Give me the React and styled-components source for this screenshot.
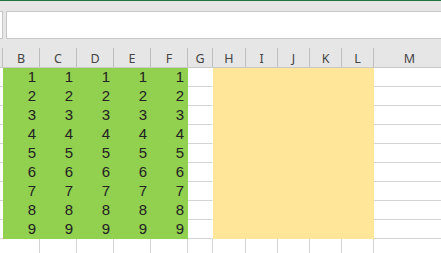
import styled, { createGlobalStyle } from "styled-components";

const GlobalStyle = createGlobalStyle`
  html, body {
    margin: 0;
    padding: 0;
    background: #ffffff;
    overflow: hidden;
  }
`;

const GREEN = "#92d050";
const YELLOW = "#ffe699";
const GRID = "#d4d4d4";

// column letters with their widths in px
const columns = [
  { name: "", width: 3 },
  { name: "B", width: 37 },
  { name: "C", width: 37 },
  { name: "D", width: 37 },
  { name: "E", width: 37 },
  { name: "F", width: 37 },
  { name: "G", width: 25 },
  { name: "H", width: 33 },
  { name: "I", width: 32 },
  { name: "J", width: 32 },
  { name: "K", width: 32 },
  { name: "L", width: 32 },
  { name: "M", width: 72 },
];

const template = columns.map((c) => c.width + "px").join(" ");

function fillFor(col, row) {
  if (row > 9) return null;
  if (col >= 1 && col <= 5) return GREEN;
  if (col >= 7 && col <= 11) return YELLOW;
  return null;
}

function App() {
  const rows = Array.from({ length: 10 }, (_, i) => i + 1);

  return (
    <Window>
      <GlobalStyle />
      <Ribbon />
      <FormulaRow>
        <NameBox />
        <FormulaInput />
      </FormulaRow>
      <Spacer />
      <HeaderRow $template={template}>
        {columns.map((c, i) => (
          <HeaderCell key={i}>{c.name}</HeaderCell>
        ))}
      </HeaderRow>
      <Sheet $template={template}>
        {rows.map((r) =>
          columns.map((c, i) => {
            const fill = fillFor(i, r);
            const nextFill = i + 1 < columns.length ? fillFor(i + 1, r) : null;
            return (
              <Cell key={r + "-" + i} $fill={fill} $hideRight={!fill && !!nextFill}>
                {fill === GREEN ? r : ""}
              </Cell>
            );
          })
        )}
      </Sheet>
    </Window>
  );
}

export default App;

const Window = styled.div`
  width: 441px;
  height: 253px;
  overflow: hidden;
  background: #ffffff;
  font-family: "Liberation Sans", Arial, sans-serif;
`;

const Ribbon = styled.div`
  box-sizing: border-box;
  height: 11px;
  border-top: 1px solid #217346;
  background: #e6e6e6;
`;

const FormulaRow = styled.div`
  display: flex;
  height: 28px;
  background: #e6e6e6;
`;

const NameBox = styled.div`
  box-sizing: border-box;
  width: 3px;
  margin-right: 3px;
  background: #fdfdfd;
  border: 1px solid #c6c6c6;
  border-left: none;
`;

const FormulaInput = styled.div`
  box-sizing: border-box;
  flex: 1;
  background: #ffffff;
  border: 1px solid #c6c6c6;
  border-right: none;
`;

const Spacer = styled.div`
  height: 9px;
  background: #e6e6e6;
`;

const HeaderRow = styled.div`
  display: grid;
  grid-template-columns: ${(p) => p.$template};
  height: 20px;
  box-sizing: border-box;
  background: #e6e6e6;
  border-bottom: 1px solid #c8c8c8;
`;

const HeaderCell = styled.div`
  box-sizing: border-box;
  border-right: 1px solid #bdbdbd;
  display: flex;
  align-items: center;
  justify-content: center;
  padding-top: 2px;
  font-family: "Noto Sans", "Liberation Sans", sans-serif;
  font-size: 12.5px;
  color: #444444;
  overflow: hidden;
`;

const Sheet = styled.div`
  display: grid;
  grid-template-columns: ${(p) => p.$template};
  grid-auto-rows: 19px;
`;

const Cell = styled.div`
  box-sizing: border-box;
  background: ${(p) => p.$fill || "#ffffff"};
  border-bottom: 1px solid ${(p) => p.$fill || GRID};
  border-right: 1px solid
    ${(p) => p.$fill || (p.$hideRight ? "#ffffff" : GRID)};
  display: flex;
  align-items: flex-end;
  justify-content: flex-end;
  padding: 0 3px 1px 0;
  font-size: 15px;
  line-height: 17px;
  color: #222222;
  overflow: hidden;
`;
